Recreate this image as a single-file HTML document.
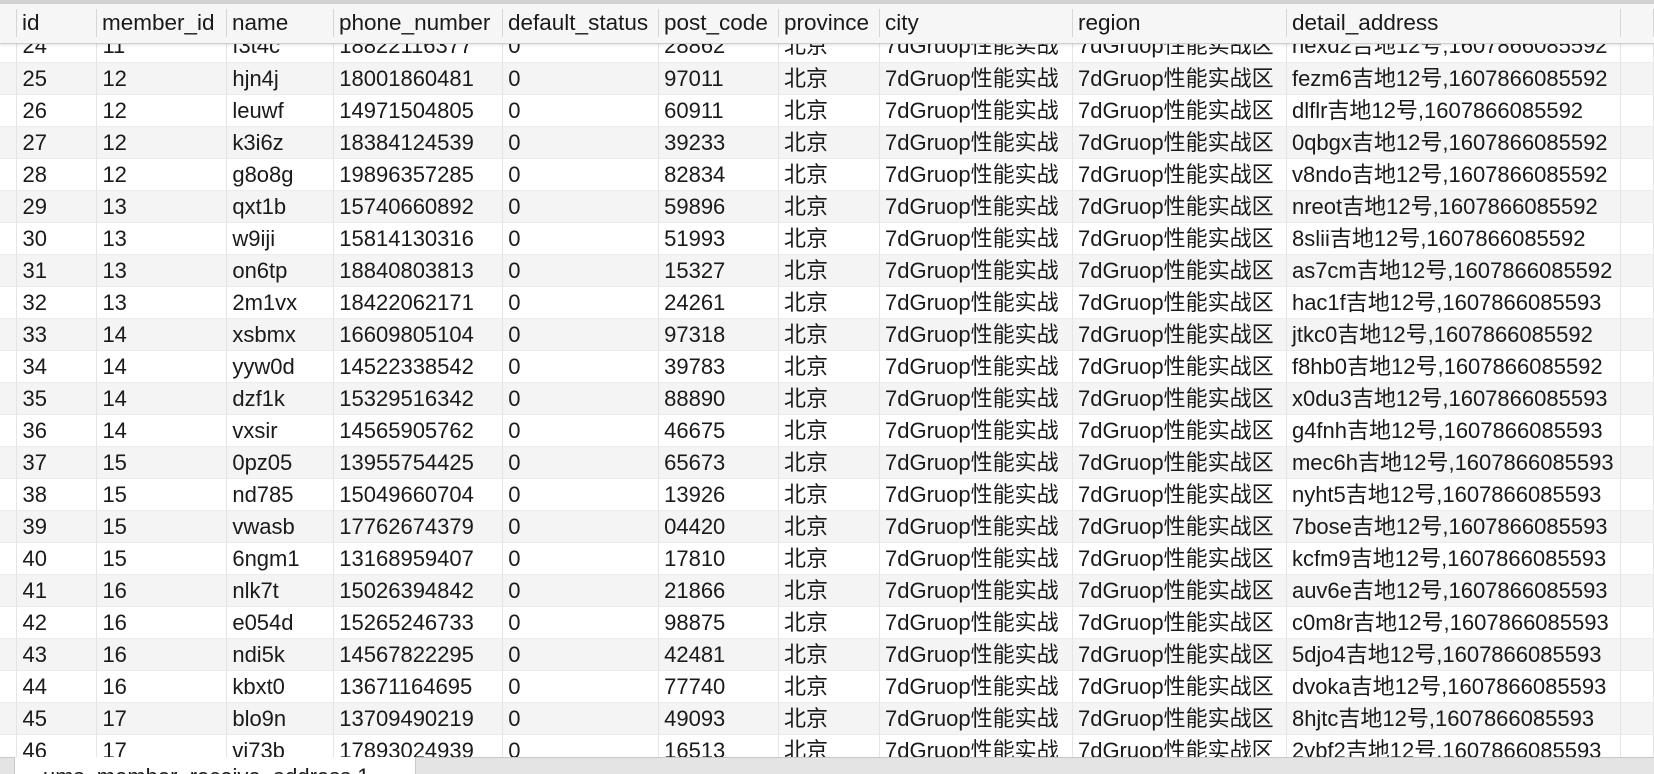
<!DOCTYPE html>
<html><head><meta charset="utf-8"><style>
*{margin:0;padding:0;box-sizing:border-box}
body{width:1654px;height:774px;overflow:hidden;background:#fff;font-family:"Liberation Sans","Noto Sans CJK SC",sans-serif;font-size:22px;color:#1a1a1a;position:relative}
table{border-collapse:collapse;table-layout:fixed;position:absolute;left:0;top:30px}
td{height:32px;padding:0 0 0 5px;white-space:nowrap;overflow:hidden;border-right:1px solid #e4e4e4;line-height:31px}
td:first-child{padding:0}
tr:nth-child(even) td{background:#f4f4f4}
tr td{border-bottom:1px solid #ececec}
.hdr{position:absolute;left:0;top:0;width:1654px;height:44px;background:#f6f6f6;border-top:4px solid #d2d2d2;border-bottom:1px solid #cfcfcf;box-shadow:0 1px 3px rgba(0,0,0,.12);display:flex;font-size:22.5px}
.hdr div{height:40px;line-height:38px;padding-left:5px;position:relative;white-space:nowrap;overflow:hidden}
.hdr div:after{content:"";position:absolute;right:0;top:5px;height:28px;border-right:1px solid #d6d6d6}
.bar{position:absolute;left:0;top:757px;width:1654px;height:17px;background:#e4e4e4;border-top:1px solid #c8c8c8}
.tab{position:absolute;left:14px;top:757px;width:402px;height:17px;background:#fff;border-left:1px solid #c8c8c8;border-right:1px solid #c8c8c8;overflow:hidden}
.tab span{position:absolute;left:28px;top:8px;font-size:22px;line-height:24px}
</style></head><body>
<table>
<colgroup><col style="width:17px"><col style="width:80px"><col style="width:130px"><col style="width:107px"><col style="width:169px"><col style="width:156px"><col style="width:120px"><col style="width:101px"><col style="width:193px"><col style="width:214px"><col style="width:334px"><col style="width:33px"></colgroup>
<tr><td></td><td>24</td><td>11</td><td>f3t4c</td><td>18822116377</td><td>0</td><td>28862</td><td>北京</td><td>7dGruop性能实战</td><td>7dGruop性能实战区</td><td>nexd2吉地12号,1607866085592</td><td></td></tr>
<tr><td></td><td>25</td><td>12</td><td>hjn4j</td><td>18001860481</td><td>0</td><td>97011</td><td>北京</td><td>7dGruop性能实战</td><td>7dGruop性能实战区</td><td>fezm6吉地12号,1607866085592</td><td></td></tr>
<tr><td></td><td>26</td><td>12</td><td>leuwf</td><td>14971504805</td><td>0</td><td>60911</td><td>北京</td><td>7dGruop性能实战</td><td>7dGruop性能实战区</td><td>dlflr吉地12号,1607866085592</td><td></td></tr>
<tr><td></td><td>27</td><td>12</td><td>k3i6z</td><td>18384124539</td><td>0</td><td>39233</td><td>北京</td><td>7dGruop性能实战</td><td>7dGruop性能实战区</td><td>0qbgx吉地12号,1607866085592</td><td></td></tr>
<tr><td></td><td>28</td><td>12</td><td>g8o8g</td><td>19896357285</td><td>0</td><td>82834</td><td>北京</td><td>7dGruop性能实战</td><td>7dGruop性能实战区</td><td>v8ndo吉地12号,1607866085592</td><td></td></tr>
<tr><td></td><td>29</td><td>13</td><td>qxt1b</td><td>15740660892</td><td>0</td><td>59896</td><td>北京</td><td>7dGruop性能实战</td><td>7dGruop性能实战区</td><td>nreot吉地12号,1607866085592</td><td></td></tr>
<tr><td></td><td>30</td><td>13</td><td>w9iji</td><td>15814130316</td><td>0</td><td>51993</td><td>北京</td><td>7dGruop性能实战</td><td>7dGruop性能实战区</td><td>8slii吉地12号,1607866085592</td><td></td></tr>
<tr><td></td><td>31</td><td>13</td><td>on6tp</td><td>18840803813</td><td>0</td><td>15327</td><td>北京</td><td>7dGruop性能实战</td><td>7dGruop性能实战区</td><td>as7cm吉地12号,1607866085592</td><td></td></tr>
<tr><td></td><td>32</td><td>13</td><td>2m1vx</td><td>18422062171</td><td>0</td><td>24261</td><td>北京</td><td>7dGruop性能实战</td><td>7dGruop性能实战区</td><td>hac1f吉地12号,1607866085593</td><td></td></tr>
<tr><td></td><td>33</td><td>14</td><td>xsbmx</td><td>16609805104</td><td>0</td><td>97318</td><td>北京</td><td>7dGruop性能实战</td><td>7dGruop性能实战区</td><td>jtkc0吉地12号,1607866085592</td><td></td></tr>
<tr><td></td><td>34</td><td>14</td><td>yyw0d</td><td>14522338542</td><td>0</td><td>39783</td><td>北京</td><td>7dGruop性能实战</td><td>7dGruop性能实战区</td><td>f8hb0吉地12号,1607866085592</td><td></td></tr>
<tr><td></td><td>35</td><td>14</td><td>dzf1k</td><td>15329516342</td><td>0</td><td>88890</td><td>北京</td><td>7dGruop性能实战</td><td>7dGruop性能实战区</td><td>x0du3吉地12号,1607866085593</td><td></td></tr>
<tr><td></td><td>36</td><td>14</td><td>vxsir</td><td>14565905762</td><td>0</td><td>46675</td><td>北京</td><td>7dGruop性能实战</td><td>7dGruop性能实战区</td><td>g4fnh吉地12号,1607866085593</td><td></td></tr>
<tr><td></td><td>37</td><td>15</td><td>0pz05</td><td>13955754425</td><td>0</td><td>65673</td><td>北京</td><td>7dGruop性能实战</td><td>7dGruop性能实战区</td><td>mec6h吉地12号,1607866085593</td><td></td></tr>
<tr><td></td><td>38</td><td>15</td><td>nd785</td><td>15049660704</td><td>0</td><td>13926</td><td>北京</td><td>7dGruop性能实战</td><td>7dGruop性能实战区</td><td>nyht5吉地12号,1607866085593</td><td></td></tr>
<tr><td></td><td>39</td><td>15</td><td>vwasb</td><td>17762674379</td><td>0</td><td>04420</td><td>北京</td><td>7dGruop性能实战</td><td>7dGruop性能实战区</td><td>7bose吉地12号,1607866085593</td><td></td></tr>
<tr><td></td><td>40</td><td>15</td><td>6ngm1</td><td>13168959407</td><td>0</td><td>17810</td><td>北京</td><td>7dGruop性能实战</td><td>7dGruop性能实战区</td><td>kcfm9吉地12号,1607866085593</td><td></td></tr>
<tr><td></td><td>41</td><td>16</td><td>nlk7t</td><td>15026394842</td><td>0</td><td>21866</td><td>北京</td><td>7dGruop性能实战</td><td>7dGruop性能实战区</td><td>auv6e吉地12号,1607866085593</td><td></td></tr>
<tr><td></td><td>42</td><td>16</td><td>e054d</td><td>15265246733</td><td>0</td><td>98875</td><td>北京</td><td>7dGruop性能实战</td><td>7dGruop性能实战区</td><td>c0m8r吉地12号,1607866085593</td><td></td></tr>
<tr><td></td><td>43</td><td>16</td><td>ndi5k</td><td>14567822295</td><td>0</td><td>42481</td><td>北京</td><td>7dGruop性能实战</td><td>7dGruop性能实战区</td><td>5djo4吉地12号,1607866085593</td><td></td></tr>
<tr><td></td><td>44</td><td>16</td><td>kbxt0</td><td>13671164695</td><td>0</td><td>77740</td><td>北京</td><td>7dGruop性能实战</td><td>7dGruop性能实战区</td><td>dvoka吉地12号,1607866085593</td><td></td></tr>
<tr><td></td><td>45</td><td>17</td><td>blo9n</td><td>13709490219</td><td>0</td><td>49093</td><td>北京</td><td>7dGruop性能实战</td><td>7dGruop性能实战区</td><td>8hjtc吉地12号,1607866085593</td><td></td></tr>
<tr><td></td><td>46</td><td>17</td><td>vi73b</td><td>17893024939</td><td>0</td><td>16513</td><td>北京</td><td>7dGruop性能实战</td><td>7dGruop性能实战区</td><td>2vbf2吉地12号,1607866085593</td><td></td></tr>
</table>
<div class="hdr">
<div style="width:17px;padding:0"></div>
<div style="width:80px">id</div>
<div style="width:130px">member_id</div>
<div style="width:107px">name</div>
<div style="width:169px">phone_number</div>
<div style="width:156px">default_status</div>
<div style="width:120px">post_code</div>
<div style="width:101px">province</div>
<div style="width:193px">city</div>
<div style="width:214px">region</div>
<div style="width:334px">detail_address</div>
<div style="width:33px"></div>
</div>
<div class="bar"></div>
<div class="tab"><span>ums_member_receive_address 1</span></div>
</body></html>
